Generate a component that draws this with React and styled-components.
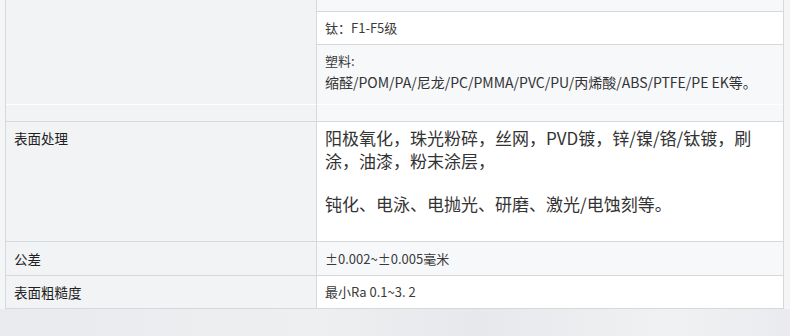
import React from "react";
import styled, { createGlobalStyle } from "styled-components";

const Global = createGlobalStyle`
  html, body {
    margin: 0;
    padding: 0;
    background: #f4f5f7;
  }
  body {
    font-family: "Noto Sans CJK SC", "Noto Sans", sans-serif;
    color: #333;
  }
`;

const Page = styled("div")`
  width: 790px;
  height: 336px;
  overflow: hidden;
  display: flex;
  flex-direction: column;
`;

const Table = styled("div")`
  display: grid;
  grid-template-columns: 311px minmax(0, 1fr);
  width: 779px;
  margin-left: 5px;
  box-sizing: border-box;
  border-left: 1px solid #d6d8db;
  border-right: 1px solid #d6d8db;
  background: #fff;
`;

const Label = styled("div")`
  grid-row: ${(p) => p.span || "auto"};
  background: #f2f3f5;
  border-right: 1px solid #d6d8db;
  border-bottom: 1px solid ${(p) => p.line || "#d6d8db"};
  padding: ${(p) => (p.top ? "5px 8px" : "0 8px")};
  display: flex;
  align-items: ${(p) => (p.top ? "flex-start" : "center")};
  font-size: 13.5px;
  font-weight: 400;
  line-height: 22px;
  color: #1f1f1f;
  height: ${(p) => p.h || "auto"};
  box-sizing: content-box;
`;

const Cell = styled("div")`
  background: ${(p) => (p.shade ? "#f7f8fa" : "#fff")};
  border-bottom: 1px solid ${(p) => p.line || "#d6d8db"};
  padding: ${(p) => p.pad || "0 8px"};
  height: ${(p) => p.h};
  display: flex;
  flex-direction: column;
  justify-content: ${(p) => (p.top ? "flex-start" : "center")};
  font-size: 13px;
  line-height: 22px;
  color: #3a3a3a;
  box-sizing: border-box;
`;

const Big = styled("div")`
  font-size: ${(p) => p.size || "14px"};
  line-height: ${(p) => p.lh || "21px"};
  color: #333;
  white-space: nowrap;
`;

const Gap = styled("div")`
  height: 20px;
`;

const Below = styled("div")`
  flex: 1;
  background: linear-gradient(90deg, #e8eaed 0%, #edeff1 40%, #e6e8eb 60%, #eff1f3 85%, #e9ebee 100%);
`;

export default function App() {
  return (
    <Page>
      <Global />
      <Table>
        <Label span="1 / 4" line="#fff" />
        <Cell shade h="12px" />
        <Cell h="33px">钛：F1-F5级</Cell>
        <Cell shade top h="60px" pad="5px 8px 0" line="#fff">
          <div>塑料:</div>
          <Big>缩醛/POM/PA/尼龙/PC/PMMA/PVC/PU/丙烯酸/ABS/PTFE/PE EK等。</Big>
        </Cell>

        <Label h="16px" />
        <Cell shade h="17px" />

        <Label top h="109px">表面处理</Label>
        <Cell top h="120px" pad="4px 8px 0">
          <Big size="17px" lh="23px">
            阳极氧化，珠光粉碎，丝网，PVD镀，锌/镍/铬/钛镀，刷
            <br />
            涂，油漆，粉末涂层，
          </Big>
          <Gap />
          <Big size="17px" lh="23px">钝化、电泳、电抛光、研磨、激光/电蚀刻等。</Big>
        </Cell>

        <Label h="33px">公差</Label>
        <Cell shade h="34px">±0.002~±0.005毫米</Cell>

        <Label h="32px">表面粗糙度</Label>
        <Cell h="33px">最小Ra 0.1~3. 2</Cell>
      </Table>
      <Below />
    </Page>
  );
}
